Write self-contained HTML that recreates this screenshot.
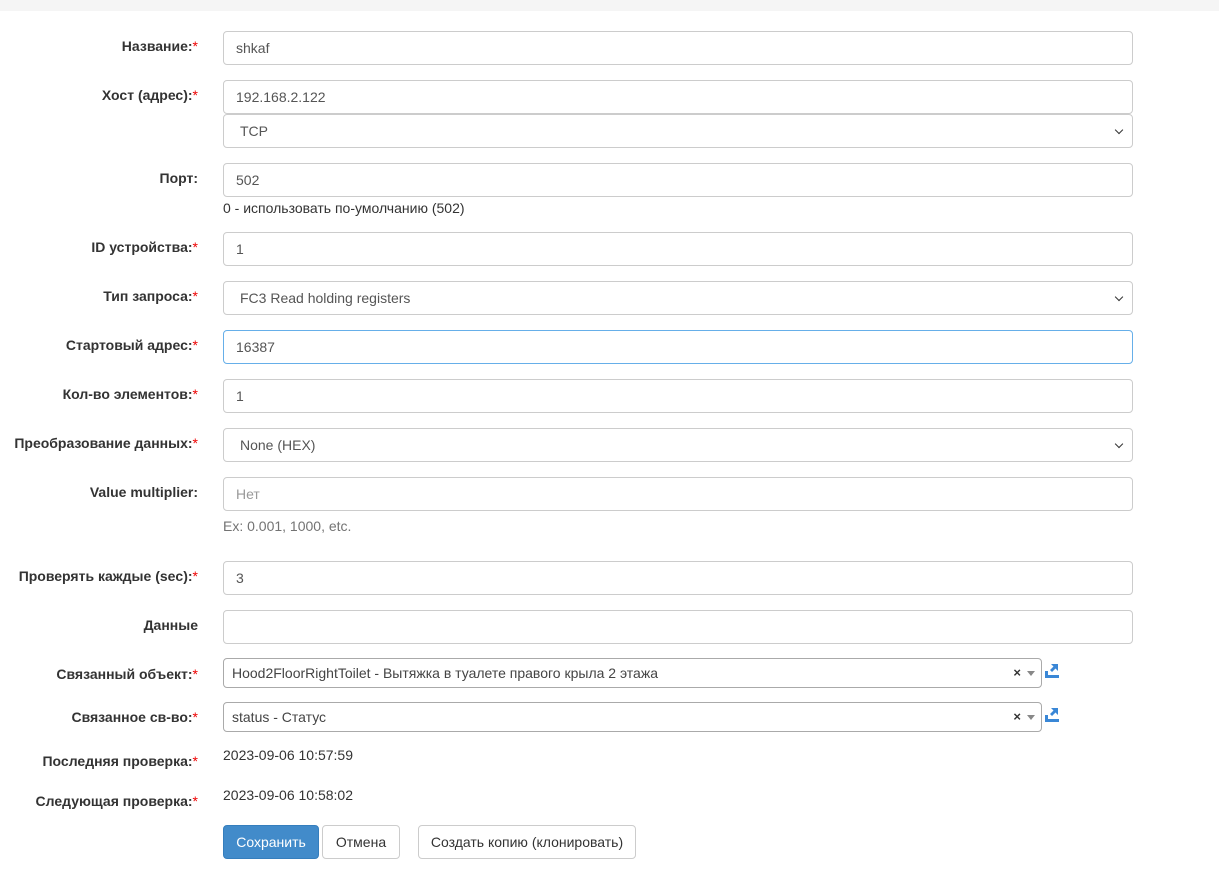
<!DOCTYPE html>
<html><head><meta charset="utf-8"><style>
body{margin:0;width:1219px;height:883px;background:#fff;font-family:"Liberation Sans",Arial,sans-serif;font-size:14px;color:#333;position:relative;overflow:hidden}
.top{position:absolute;left:0;top:0;width:1219px;height:11px;background:#f5f5f5}
.l{position:absolute;right:1021px;font-weight:bold;white-space:nowrap;line-height:20px}
.l i{color:#e00;font-style:normal;font-weight:normal}
.in{position:absolute;left:223px;height:32px;border:1px solid #ccc;border-radius:4px;box-sizing:content-box;line-height:32px;padding-left:12px;width:896px;color:#555}
.sel{padding-left:16px;width:892px}
.sel:after{content:"";position:absolute;right:10px;top:12px;width:5px;height:5px;border-right:1.5px solid #333;border-bottom:1.5px solid #333;transform:rotate(45deg)}
.s2{position:absolute;left:223px;width:809px;height:28px;border:1px solid #aaa;border-radius:4px;line-height:28px;padding-left:8px;color:#444}
.s2 .x{position:absolute;right:20px;top:0;font-weight:bold;font-size:13px;color:#333}
.s2 .a{position:absolute;right:6px;top:12px;border:4px solid transparent;border-top:5px solid #888;border-bottom:0}
.ic{position:absolute;left:1045px;width:14px;height:15px}
.h{position:absolute;left:223px;line-height:20px}
.v{position:absolute;left:223px;line-height:20px;color:#333}
.btn{position:absolute;top:825px;height:32px;border:1px solid #ccc;border-radius:4px;line-height:32px;text-align:center;background:#fff;color:#333}
</style></head><body>
<div class="top"></div>

<div class="l" style="top:36px">Название:<i>*</i></div>
<div class="in" style="top:31px">shkaf</div>

<div class="l" style="top:85px">Хост (адрес):<i>*</i></div>
<div class="in" style="top:80px">192.168.2.122</div>
<div class="in sel" style="top:114px">TCP</div>

<div class="l" style="top:168px">Порт:</div>
<div class="in" style="top:163px">502</div>
<div class="h" style="top:198px">0 - использовать по-умолчанию (502)</div>

<div class="l" style="top:237px">ID устройства:<i>*</i></div>
<div class="in" style="top:232px">1</div>

<div class="l" style="top:286px">Тип запроса:<i>*</i></div>
<div class="in sel" style="top:281px">FC3 Read holding registers</div>

<div class="l" style="top:335px">Стартовый адрес:<i>*</i></div>
<div class="in" style="top:330px;border-color:#66afe9">16387</div>

<div class="l" style="top:384px">Кол-во элементов:<i>*</i></div>
<div class="in" style="top:379px">1</div>

<div class="l" style="top:433px">Преобразование данных:<i>*</i></div>
<div class="in sel" style="top:428px">None (HEX)</div>

<div class="l" style="top:482px">Value multiplier:</div>
<div class="in" style="top:477px;color:#999">Нет</div>
<div class="h" style="top:516px;color:#737373">Ex: 0.001, 1000, etc.</div>

<div class="l" style="top:566px">Проверять каждые (sec):<i>*</i></div>
<div class="in" style="top:561px">3</div>

<div class="l" style="top:615px">Данные</div>
<div class="in" style="top:610px"></div>

<div class="l" style="top:664px">Связанный объект:<i>*</i></div>
<div class="s2" style="top:658px">Hood2FloorRightToilet - Вытяжка в туалете правого крыла 2 этажа<span class="x">×</span><span class="a"></span></div>
<svg class="ic" style="top:663px" viewBox="0 0 14 15"><path d="M6 1h7v7l-2.5-2.5L7 9 5 7l3.5-3.5z" fill="#3a87d6"/><rect x="0" y="12" width="14" height="3" fill="#3a87d6"/><rect x="0" y="8" width="3" height="4" fill="#3a87d6"/></svg>

<div class="l" style="top:707px">Связанное св-во:<i>*</i></div>
<div class="s2" style="top:702px">status - Статус<span class="x">×</span><span class="a"></span></div>
<svg class="ic" style="top:707px" viewBox="0 0 14 15"><path d="M6 1h7v7l-2.5-2.5L7 9 5 7l3.5-3.5z" fill="#3a87d6"/><rect x="0" y="12" width="14" height="3" fill="#3a87d6"/><rect x="0" y="8" width="3" height="4" fill="#3a87d6"/></svg>

<div class="l" style="top:751px">Последняя проверка:<i>*</i></div>
<div class="v" style="top:745px">2023-09-06 10:57:59</div>

<div class="l" style="top:791px">Следующая проверка:<i>*</i></div>
<div class="v" style="top:785px">2023-09-06 10:58:02</div>

<div class="btn" style="left:223px;width:94px;background:#428bca;border-color:#357ebd;color:#fff">Сохранить</div>
<div class="btn" style="left:322px;width:76px">Отмена</div>
<div class="btn" style="left:418px;width:216px">Создать копию (клонировать)</div>
</body></html>
